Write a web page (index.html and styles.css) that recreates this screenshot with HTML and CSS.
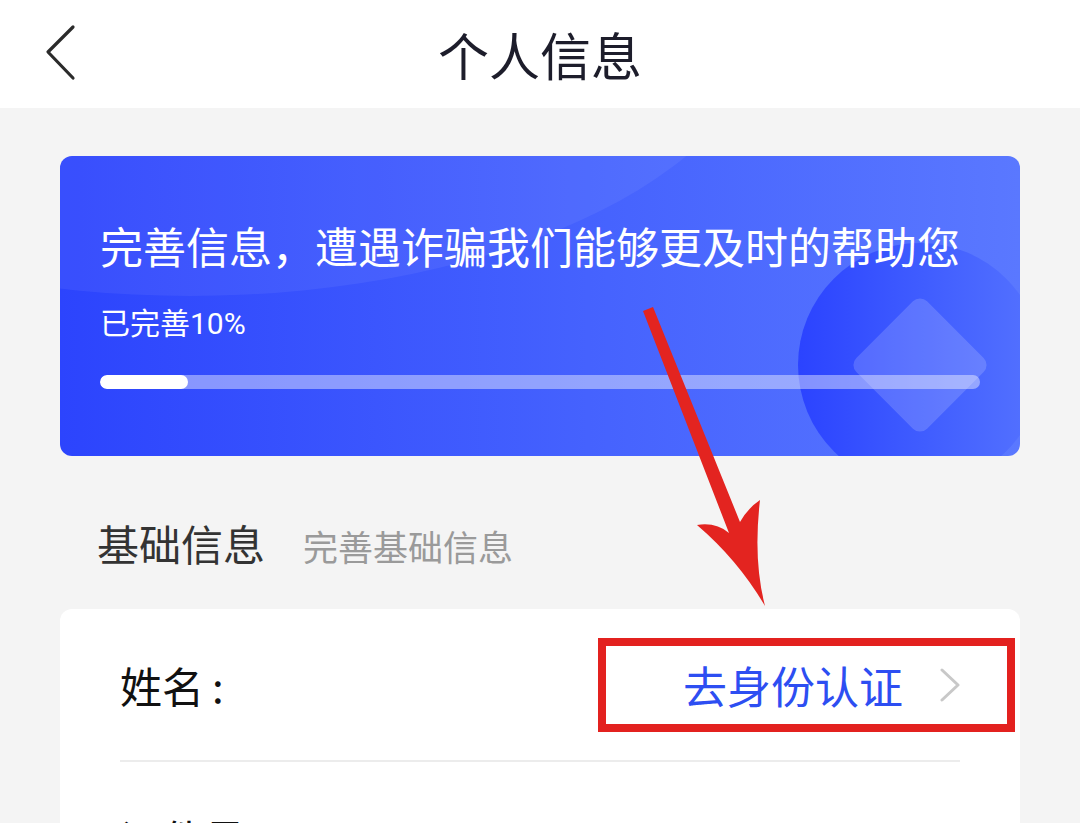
FILE: index.html
```html
<!DOCTYPE html>
<html lang="zh-CN">
<head>
<meta charset="utf-8">
<title>个人信息</title>
<link rel="stylesheet" href="styles.css">
</head>
<body>
<div class="page">
  <header class="topbar">
    <div class="back">
      <svg width="40" height="60" viewBox="0 0 40 60"><polyline points="33,3 8,28 33,54" fill="none" stroke="#2b2b2b" stroke-width="3.2" stroke-linecap="round" stroke-linejoin="round"/></svg>
    </div>
    <h1 class="title">个人信息</h1>
    <div class="spacer"></div>
  </header>

  <main class="content">
    <section class="banner">
      <div class="banner-arc"></div>
      <div class="banner-circle"><div class="banner-diamond"></div></div>
      <div class="banner-body">
        <p class="banner-title">完善信息，遭遇诈骗我们能够更及时的帮助您</p>
        <p class="banner-progress-text">已完善10%</p>
        <div class="progress"><div class="progress-fill" style="width:10%"></div></div>
      </div>
    </section>

    <div class="section-head">
      <span class="section-title">基础信息</span>
      <span class="section-sub">完善基础信息</span>
    </div>

    <section class="card">
      <div class="row">
        <span class="label">姓名<span class="colon">:</span></span>
        <a class="action">
          <span class="action-text">去身份认证</span>
          <svg class="chev" width="22" height="34" viewBox="0 0 22 34"><polyline points="3,2 19,17 3,32" fill="none" stroke="#c8c8c8" stroke-width="3" stroke-linecap="round" stroke-linejoin="round"/></svg>
        </a>
      </div>
      <div class="divider"></div>
      <div class="row">
        <span class="label">证件号</span>
      </div>
    </section>
  </main>

  <svg class="annot" width="1080" height="823" viewBox="0 0 1080 823">
    <path d="M643,311 L653,307 L740,522 Q748,508 760,500 Q753,560 765,606 Q738,560 697,525 Q716,522 729,533 Z" fill="#e32420"/>
  </svg>
</div>
</body>
</html>
```

FILE: styles.css
```css
html, body {
  margin: 0;
  padding: 0;
  height: 823px;
  overflow: hidden;
}
body {
  background: #f4f4f4;
  font-family: "Noto Sans CJK SC", "Noto Sans", sans-serif;
}
.page {
  position: relative;
  width: 1080px;
  height: 823px;
  overflow: hidden;
}
.topbar {
  height: 108px;
  background: #ffffff;
  display: grid;
  grid-template-columns: 1fr auto 1fr;
  align-items: center;
}
.back {
  padding-left: 40px;
  display: flex;
  align-items: center;
}
.back svg { display: block; }
.title {
  margin: 0;
  font-size: 51px;
  font-weight: 400;
  line-height: 1;
  color: #1d1d2b;
}
.content {
  padding: 48px 60px 0;
}
.banner {
  position: relative;
  height: 300px;
  border-radius: 12px;
  overflow: hidden;
  background: linear-gradient(90deg, #2c44fd 0%, #4562fe 55%, #5a78ff 100%);
}
.banner-arc {
  position: absolute;
  left: -450px;
  top: -440px;
  width: 1160px;
  height: 580px;
  border-radius: 50%;
  background: rgba(255, 255, 255, 0.06);
}
.banner-circle {
  position: absolute;
  left: 738px;
  top: 87px;
  width: 244px;
  height: 244px;
  border-radius: 50%;
  background: linear-gradient(90deg, #2b43ff 0%, #3f5cff 50%, #5573ff 100%);
}
.banner-diamond {
  position: absolute;
  left: 72px;
  top: 72px;
  width: 100px;
  height: 100px;
  border-radius: 10px;
  transform: rotate(45deg);
  background: rgba(255, 255, 255, 0.16);
}
.banner-body {
  position: relative;
  padding: 68px 40px 0;
  color: #ffffff;
}
.banner-title {
  margin: 0;
  font-size: 43px;
  line-height: 1;
  font-weight: 400;
  white-space: nowrap;
}
.banner-progress-text {
  margin: 42px 0 0;
  font-family: Roboto, "Noto Sans CJK SC", sans-serif;
  font-size: 30px;
  line-height: 1;
}
.progress {
  margin-top: 36px;
  height: 14px;
  border-radius: 7px;
  background: rgba(255, 255, 255, 0.42);
  overflow: hidden;
}
.progress-fill {
  height: 100%;
  background: #ffffff;
  border-radius: 7px;
}
.section-head {
  display: flex;
  align-items: baseline;
  gap: 38px;
  padding: 66px 0 0 37px;
  height: 87px;
}
.section-title {
  font-size: 42px;
  line-height: 1;
  color: #333333;
}
.section-sub {
  font-size: 35px;
  line-height: 1;
  color: #9a9a9a;
}
.card {
  background: #ffffff;
  border-radius: 12px 12px 0 0;
}
.row {
  height: 151px;
  display: flex;
  align-items: center;
  justify-content: space-between;
  padding: 0 5px 0 60px;
}
.label {
  font-size: 42px;
  line-height: 1;
  color: #111111;
}
.colon {
  margin-left: 8px;
}
.action {
  box-sizing: border-box;
  width: 417px;
  height: 94px;
  border: 8px solid #e3211f;
  display: flex;
  align-items: center;
  justify-content: flex-end;
  gap: 36px;
  padding-right: 46px;
}
.action-text {
  font-size: 44px;
  line-height: 1;
  color: #2d4ef2;
}
.chev { display: block; }
.divider {
  height: 2px;
  background: #ececec;
  margin: 0 60px;
}
.annot {
  position: absolute;
  left: 0;
  top: 0;
  pointer-events: none;
}
```
